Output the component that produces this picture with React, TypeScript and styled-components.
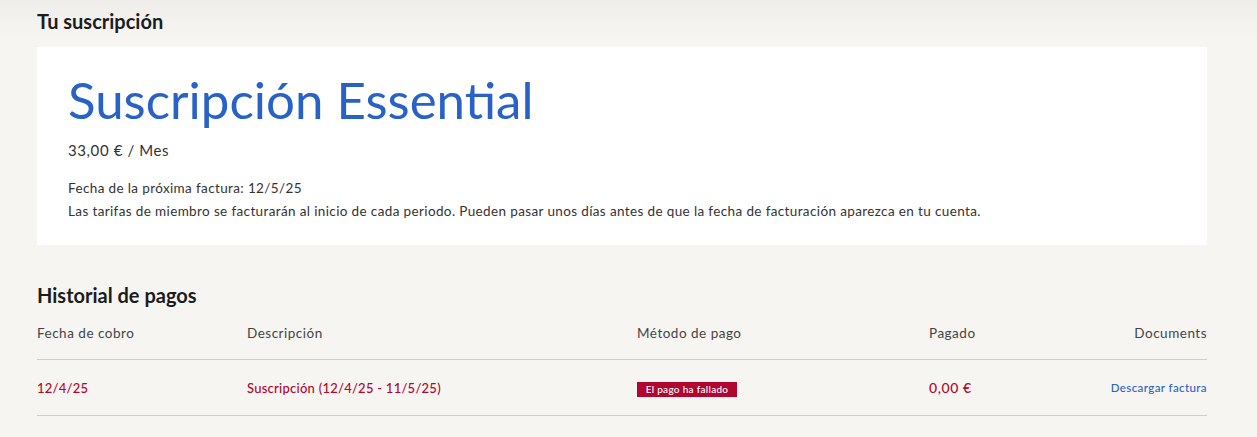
import React from 'react';
import styled, { createGlobalStyle } from 'styled-components';

const GlobalStyle = createGlobalStyle`
  html, body {
    margin: 0;
    padding: 0;
    background: #f6f5f2;
  }
  body {
    font-family: "Lato", "Liberation Sans", sans-serif;
    color: #2b2b2b;
  }
`;

const Page = styled.div`
  min-height: 437px;
  padding: 8px 50px 0 37px;
  background: linear-gradient(180deg, #efeeeb 0px, #f6f5f2 40px);
  box-sizing: border-box;
`;

const SectionTitle = styled.h2<{ $top?: number }>`
  margin: ${p => p.$top ?? 0}px 0 0;
  font-size: 20px;
  line-height: 26px;
  font-weight: 700;
  color: #1c1c1c;
`;

const Card = styled.section`
  margin-top: 13px;
  background: #ffffff;
  padding: 24px 31px 22px;
`;

const PlanName = styled.h1`
  margin: 0;
  font-size: 51px;
  line-height: 58px;
  font-weight: 400;
  color: #2862c9;
`;

const Price = styled.div`
  margin-top: 12px;
  font-size: 15px;
  letter-spacing: 0.6px;
  color: #333;
`;

const Note = styled.p<{ $top?: number }>`
  margin: ${p => p.$top ?? 0}px 0 0;
  font-size: 13.5px;
  letter-spacing: 0.37px;
  line-height: 23px;
  color: #333;
`;

const Table = styled.div`
  margin-top: 16px;
  display: flex;
  flex-direction: column;
`;

const Row = styled.div<{ $head?: boolean }>`
  display: grid;
  grid-template-columns: 210px 390px 292px 1fr 1fr;
  align-items: center;
  line-height: 18px;
  padding: ${p => (p.$head ? '0 0 17px' : '18px 0 18px')};
  border-bottom: 1px solid #cfcecb;
`;

const HeadCell = styled.div<{ $right?: boolean }>`
  color: #444;
  font-size: 13.5px;
  letter-spacing: 0.5px;
  text-align: ${p => (p.$right ? 'right' : 'left')};
`;

const Cell = styled.div<{ $right?: boolean; $big?: boolean }>`
  color: #b0062f;
  font-weight: 500;
  font-size: ${p => (p.$big ? 14 : 13)}px;
  letter-spacing: ${p => (p.$big ? 0.6 : 0.25)}px;
  text-align: ${p => (p.$right ? 'right' : 'left')};
`;

const Badge = styled.span`
  display: inline-block;
  width: 100px;
  height: 15px;
  line-height: 15px;
  background: #b0062f;
  color: #fff;
  font-size: 10px;
  letter-spacing: 0.3px;
  text-align: center;
  vertical-align: middle;
`;

const Link = styled.a`
  color: #2862c9;
  font-size: 11.5px;
  letter-spacing: 0.4px;
  text-decoration: none;
  cursor: pointer;
`;

export default function App() {
  return (
    <>
      <GlobalStyle />
      <Page>
        <SectionTitle>Tu suscripción</SectionTitle>
        <Card>
          <PlanName>Suscripción Essential</PlanName>
          <Price>33,00 € / Mes</Price>
          <Note $top={18}>Fecha de la próxima factura: 12/5/25</Note>
          <Note>
            Las tarifas de miembro se facturarán al inicio de cada periodo. Pueden pasar unos días antes de que la fecha de
            facturación aparezca en tu cuenta.
          </Note>
        </Card>
        <SectionTitle $top={37}>Historial de pagos</SectionTitle>
        <Table>
          <Row $head>
            <HeadCell>Fecha de cobro</HeadCell>
            <HeadCell>Descripción</HeadCell>
            <HeadCell>Método de pago</HeadCell>
            <HeadCell>Pagado</HeadCell>
            <HeadCell $right>Documents</HeadCell>
          </Row>
          <Row>
            <Cell>12/4/25</Cell>
            <Cell>Suscripción (12/4/25 - 11/5/25)</Cell>
            <Cell>
              <Badge>El pago ha fallado</Badge>
            </Cell>
            <Cell $big>0,00 €</Cell>
            <Cell $right>
              <Link>Descargar factura</Link>
            </Cell>
          </Row>
        </Table>
      </Page>
    </>
  );
}
